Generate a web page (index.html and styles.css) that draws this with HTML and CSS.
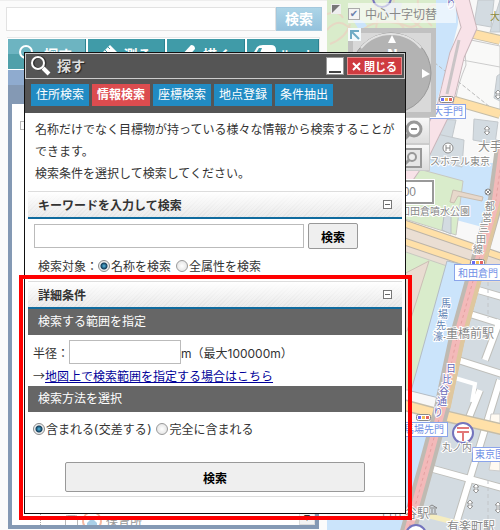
FILE: index.html
```
<!DOCTYPE html>
<html lang="ja">
<head>
  <meta charset="UTF-8">
  <meta name="viewport" content="width=device-width, initial-scale=1.0">
  <title>地図検索</title>
  <link rel="stylesheet" href="styles.css">
</head>
<body>

  <div class="page">
    <!-- 左メニュー -->
    <div class="sidebar">
      <form class="site-search">
        <input type="text" aria-label="キーワード">
        <button type="submit">検索</button>
      </form>
      <nav class="main-menu">
        <a href="#" class="current">
          <svg width="18" height="18" viewBox="0 0 18 18"><circle cx="7" cy="7" r="6" fill="none" stroke="#fff" stroke-width="2"/><path d="M11 11l6 6" stroke="#fff" stroke-width="3"/></svg>探す</a>
        <a href="#">
          <svg width="18" height="18" viewBox="0 0 18 18"><path d="M0 11L11 0l7 7L7 18z" fill="#fff"/><path d="M3 8l2 2M6 5l2 2M9 2l2 2" stroke="#409ba8"/></svg>測る</a>
        <a href="#">
          <svg width="18" height="18" viewBox="0 0 18 18"><path d="M0 18l2-6L13 0q4 0 4 4L6 16z" fill="#fff"/></svg>描く</a>
        <a href="#" class="route">
          <svg width="23" height="18" viewBox="0 0 23 18"><path d="M0 9L4 2q2-2 6-2h8q5 0 5 5v10H0z" fill="#fff"/><path d="M3 8l3-5h3L7 8z" fill="#409ba8"/><circle cx="6" cy="15" r="3" fill="#fff"/><circle cx="17" cy="15" r="3" fill="#fff"/></svg>ルート</a>
      </nav>
      <div class="layer-panel">
        <div class="layer-tree">
          <span class="tree-toggle"></span>
          <label class="tree-item">
            <input type="checkbox">
            <svg width="20" height="20" viewBox="0 0 20 20"><circle cx="10" cy="10" r="9" fill="#fff" stroke="#f5b9a2" stroke-width="2"/><path d="M5 12l5-5 5 5v4H5z" fill="#a9cfe8"/></svg>
            保育所
          </label>
          <span class="tree-scroll">▾</span>
        </div>
      </div>
    </div>

    <!-- 地図 -->
    <div class="map">
      <svg class="map-canvas" viewBox="327 0 173 530" preserveAspectRatio="xMinYMin slice">
        <rect x="327" y="0" width="600" height="530" fill="#f8f8f8"/>

        <!-- 公園と濠 -->
        <path d="M327 0H438V55H327z" fill="#d9eccb"/>
        <g fill="none" stroke="#e6d8c4" stroke-width="2">
          <path d="M327 30q10-12 20-4t18 2 20-6 22 4 16-10 15-10M330 44q16-6 20-20M372 0q8 12 4 28M394 0q-4 16 10 28M418 0q-2 12 14 26M404 14l20 16M327 14q12-4 16 4M384 8l14 10"/>
        </g>
        <path d="M353 20q10-2 14 6l-8 4zM436 0h22v24l-10 40-12 40z" fill="#cbe4fb"/>
        <path d="M386 2l16 1-2 14-16-2z" fill="#d3dbe1"/>
        <path d="M421 155l22 7 50 1-7 65-82-22z" fill="#cbe4fb"/>
        <path d="M415 168l48 13-7 54-51-16v-42z" fill="#d9eccb" stroke="#c8c8c0"/>
        <path d="M450 202l3-12 30 7-1 4-24-5-4 7z" fill="#e7d8cb" stroke="#c9bdb0"/>
        <path d="M444 216l7-3v21l-9-4z" fill="#d3dbe1" stroke="#b9c0c4"/>

        <!-- 建物 -->
        <g fill="#d3dbe1" stroke="#c3c8cc">
          <path d="M478 0h16l-3 27-17-3zM500 0v32h-10z"/>
          <path d="M438 119l18 1-4 18-18-4zM474 119l24 3-3 22-22-4z"/>
          <path d="M437 134l27 6-2 27-34-8z"/>
        </g>

        <!-- 白い道路 -->
        <path d="M466 65q-2-20 0-26l34 7v64l-44-12q2-14 10-33z" fill="#f9f9f8" stroke="#c8c8c8"/>
        <path d="M500 74v27l-6-3 3-22z" fill="#d3dbe1" stroke="#c3c8cc"/>
        <path d="M462 60l38 7" stroke="#ccc" fill="none"/>
        <path d="M425 55l75 60" stroke="#bbb" stroke-dasharray="4 2" fill="none"/>

        <!-- オレンジ道路 -->
        <path d="M465 32l35 8M448 99l52 15" stroke="#c5bda8" stroke-width="10" fill="none"/>
        <path d="M465 32l35 8M448 99l52 15" stroke="#ffe0a8" stroke-width="8" fill="none"/>

        <!-- ピンクの道路 -->
        <path d="M461-2l8 30-12 27-13 54-22 45-18 26" stroke="#c9b6bb" stroke-width="16" fill="none"/>
        <path d="M461-2l8 30-12 27-13 54-22 45-18 26" stroke="#f8e2e8" stroke-width="14" fill="none"/>
        <path d="M459 40l-12 54" stroke="#c9c4c6" stroke-width="3" fill="none"/>

        <!-- 和田倉の大通り -->
        <path d="M400 220l80 28 25 8v35l-45-12-60-18z" fill="#eaded3"/>
        <path d="M400 222l102 35M400 240l80 27" stroke="#bcb4a8" stroke-width="8" fill="none"/>
        <path d="M400 222l102 35M400 240l80 27" stroke="#ffe0a8" stroke-width="6" fill="none"/>
        <path d="M400 250l50 17-32 123h-18z" fill="#d9eccb" stroke="#c8c8c0"/>
        <path d="M400 276l29-15-22 70h-7z" fill="#e9dcd1" stroke="#cbbfb5"/>
        <path d="M447 261l26 6-21 85-13 46-28-7z" fill="#cbe4fb" stroke="#b4bcc4"/>
        <path d="M405 436h28l-18 70-10 24h-78v-12h78z" fill="#cbe4fb" stroke="#b4bcc4"/>

        <!-- 丸の内の街区 -->
        <path d="M480 282h20v248H405l40-118z" fill="#d3dbe1"/>
        <path d="M327 516h78v14h-78z" fill="#cbe4fb"/>
        <g fill="none" stroke="#bfbfbb" stroke-width="8">
          <path d="M478 290l24 7M470 314l32 10M458 360l44 14M500 320l-15 40M500 380l-52 170M426 467l80 22M480 390l-12 30"/>
        </g>
        <g fill="none" stroke="#fff" stroke-width="6">
          <path d="M478 290l24 7M470 314l32 10M458 360l44 14M500 320l-15 40M500 380l-52 170M426 467l80 22M480 390l-12 30"/>
        </g>
        <path d="M455 378l20 6-3 18" stroke="#fff" stroke-width="4" fill="none"/>
        <path d="M491 414h9v16l-11-3zM491 460h9v11l-11-1z" fill="#fffaf2" stroke="#ccc"/>
        <path d="M400 404l45 12 60 14" stroke="#c5bda8" stroke-width="12" fill="none"/>
        <path d="M400 404l45 12 60 14" stroke="#ffe0a8" stroke-width="9" fill="none"/>
        <path d="M430 516l46 12" stroke="#f5edc0" stroke-width="5" fill="none"/>
        <path d="M488 282v36M488 480v50" stroke="#c2c5c8" stroke-dasharray="4 3" fill="none"/>

        <!-- 都営三田線 -->
        <path d="M504 140l-8 60-20 70-20 72-14 66-14 52-24 86" stroke="#bfbab2" stroke-width="16" fill="none"/>
        <path d="M508 140l-8 60-18 70-20 72-14 66" stroke="#dfc79e" stroke-width="5" fill="none"/>
        <path d="M504 140l-8 60-20 70-20 72-14 66-14 52-24 86" stroke="#f3b9b9" stroke-width="8" fill="none"/>
        <path d="M504 140l-8 60-20 70-20 72-14 66-14 52-24 86" stroke="#e3a0a0" stroke-dasharray="3 3" fill="none"/>

        <!-- 信号 -->
        <g stroke="#888" fill="#fff">
          <rect x="439.5" y="96.500" width="14" height="6" rx="2"/>
          <rect x="470.5" y="259.500" width="14" height="6" rx="2"/>
          <rect x="416.500" y="414.500" width="14" height="6" rx="2"/>
        </g>
        <path d="M441 98h3v3h-3zM472 261h3v3h-3zM418 416h3v3h-3z" fill="#6b6bf0"/>
        <path d="M445 98h3v3h-3zM476 261h3v3h-3zM422 416h3v3h-3z" fill="#f2bd55"/>
        <path d="M449 98h3v3h-3zM480 261h3v3h-3zM426 416h3v3h-3z" fill="#e36464"/>

        <!-- 記号 -->
        <g fill="none" stroke="#7474bd" stroke-width="2">
          <circle cx="463" cy="433" r="10" fill="#fff"/>
          <circle cx="416" cy="535" r="10" fill="#fff"/>
          <circle cx="382" cy="-2" r="9"/>
        </g>
        <path d="M457 428h12M457 432h12M463 432v9" stroke="#e27878" stroke-width="2" fill="none"/>
        <circle cx="448" cy="148" r="5" fill="#fff" stroke="#888"/>
        <path d="M446 145v6M450 145v6M446 148h4" stroke="#888" fill="none"/>
        <circle cx="488" cy="192" r="3" fill="#fff" stroke="#888"/>
        <path d="M486 190l4 4M490 190l-4 4" stroke="#888"/>
        <path d="M427 508l5-3 5 3zM429 509v4M432 509v4M435 509v4M427 514h10" stroke="#888" fill="none"/>
        <g fill="#fff" stroke="#999">
          <path d="M487 126l3 3h-2v3h2l-3 3-3-3h2v-3h-2zM476 484l3 3h-2v3h2l-3 3-3-3h2v-3h-2zM470 500l3 3h-2v3h2l-3 3-3-3h2v-3h-2zM498 502l3 3h-2v5h2l-3 3-3-3h2v-5h-2zM498 90l3 3h-2v3h2l-3 3-3-3h2v-3h-2z"/>
        </g>

        <!-- 注記 -->
        <g fill="#fff" stroke="#8aa4ea">
          <rect x="426.500" y="104.500" width="39" height="14"/>
          <rect x="454.500" y="264.500" width="52" height="16"/>
          <rect x="396.500" y="422.500" width="51" height="14"/>
          <rect x="472.500" y="447.500" width="50" height="14"/>
        </g>
        <g class="gate-label">
          <text x="433" y="115">大手門</text>
          <text x="458" y="277">和田倉門</text>
          <text x="404" y="433">馬場先門</text>
          <text x="475" y="458">東京国</text>
        </g>
        <g class="place-label">
          <text x="430" y="165">スホテル東京</text>
          <text x="478" y="151" class="large">大手</text>
          <text x="400" y="215">和田倉噴水公園</text>
          <text x="442" y="451">丸ノ内</text>
          <text x="434" y="338" class="large">二重橋前駅</text>
          <text x="381" y="518" class="large">日比谷駅</text>
          <text x="447" y="531" class="large">有楽町駅</text>
          <text x="485" y="210">都</text>
          <text x="482" y="221">営</text>
          <text x="479" y="232">三</text>
          <text x="476" y="243">田</text>
          <text x="473" y="253">線</text>
        </g>
        <g class="water-label">
          <text x="441" y="307">馬</text>
          <text x="438" y="318">場</text>
          <text x="436" y="329">先</text>
          <text x="433" y="340">濠</text>
        </g>
        <g class="street-label">
          <text x="446" y="8">り</text>
          <text x="446" y="372">日</text>
          <text x="442" y="383">比</text>
          <text x="439" y="394">谷</text>
          <text x="437" y="405">通</text>
          <text x="433" y="416">り</text>
        </g>
        <text x="490" y="20" class="town-label">大</text>
      </svg>

      <div class="map-tools">
        <svg class="corner" width="10" height="10" viewBox="0 0 10 10"><rect width="10" height="10" fill="#eee"/><path d="M1 1h8L1 9z" fill="#777"/></svg>
        <div class="tool-column">
          <label class="cross-toggle"><input type="checkbox" checked> 中心十字切替</label>
          <svg class="compass" width="88" height="89" viewBox="0 0 88 89">
            <rect width="88" height="89" fill="#c1c1c1"/>
            <path d="M5 5h78v79H5z" fill="#d9d9d9"/>
            <circle cx="43" cy="45" r="40" fill="#b3b3b3" stroke="#999"/>
            <path d="M13 20q12-14 30-14t30 14" stroke="#e2e2e2" stroke-width="2" fill="none"/>
            <path d="M40 15L44 7l4 8zM74 41l8 5-8 4z" fill="#fff"/>
            <text x="39" y="30" class="north">N</text>
            <path d="M0 0h13v13H0z" fill="#f4fafc"/>
            <path d="M3 11V3h8M3 3l8 8" stroke="#6eaac4" stroke-width="2" fill="none"/>
          </svg>
          <button type="button" class="zoom-button" aria-label="縮小">
            <svg width="22" height="22" viewBox="0 0 22 22"><circle cx="13" cy="9" r="7" fill="#fff" stroke="#999" stroke-width="3"/><path d="M10 9h6" stroke="#888" stroke-width="2"/><path d="M8 14l-6 6" stroke="#999" stroke-width="4"/></svg>
          </button>
          <button type="button" class="zoom-button" aria-label="範囲拡大">
            <svg width="22" height="22" viewBox="0 0 22 22"><path d="M0 2h20v18H0z" fill="#e6e6e6" stroke="#999" stroke-width="2"/><circle cx="11" cy="10" r="4" fill="#eee" stroke="#999" stroke-width="2"/><path d="M8 13l-4 4" stroke="#999" stroke-width="3"/></svg>
          </button>
          <input type="text" class="scale-box" value="10000" aria-label="縮尺">
        </div>
      </div>
    </div>
  </div>

  <!-- 検索ウィンドウ -->
  <div class="dialog" role="dialog" aria-labelledby="dialogTitle">
    <div class="dialog-title">
      <svg width="22" height="22" viewBox="0 0 22 22"><circle cx="9" cy="8" r="6" fill="none" stroke="#333" stroke-width="3"/><circle cx="8" cy="8" r="6" fill="none" stroke="#fff" stroke-width="2"/><path d="M13 13l6 6" stroke="#fff" stroke-width="4"/></svg>
      <h1 id="dialogTitle">探す</h1>
      <button type="button" class="minimize" aria-label="最小化"></button>
      <button type="button" class="close"><svg width="9" height="9" viewBox="0 0 9 9"><path d="M1 1l7 7M8 1L1 8" stroke="#fff" stroke-width="2"/></svg>閉じる</button>
    </div>
    <nav class="tabs">
      <a href="#">住所検索</a>
      <a href="#" class="active">情報検索</a>
      <a href="#">座標検索</a>
      <a href="#">地点登録</a>
      <a href="#">条件抽出</a>
    </nav>

    <form class="dialog-body">
      <p class="guide">名称だけでなく目標物が持っている様々な情報から検索することができます。<br>検索条件を選択して検索してください。</p>

      <h2>キーワードを入力して検索<button type="button" class="fold" aria-label="閉じる"></button></h2>
      <div class="keyword-row">
        <input type="text" aria-label="キーワード">
        <button type="submit">検索</button>
      </div>
      <div class="target-row">
        <span>検索対象：</span>
        <label><input type="radio" name="target" checked>名称を検索</label>
        <label><input type="radio" name="target">全属性を検索</label>
      </div>

      <h2>詳細条件<button type="button" class="fold" aria-label="閉じる"></button></h2>
      <h3>検索する範囲を指定</h3>
      <div class="radius-row">
        <label for="radius">半径：</label><input type="text" id="radius">m（最大100000m）
      </div>
      <div class="link-row">→<a href="#">地図上で検索範囲を指定する場合はこちら</a></div>
      <h3>検索方法を選択</h3>
      <div class="method-row">
        <label><input type="radio" name="method" checked>含まれる(交差する)</label>
        <label><input type="radio" name="method">完全に含まれる</label>
      </div>
      <button type="submit" class="submit-button">検索</button>
    </form>
    <div class="dialog-footer"></div>
    <div class="highlight"></div>
  </div>

</body>
</html>
```

FILE: styles.css
```
* {
  box-sizing: border-box;
}
body, input, button {
  font-family: "DejaVu Sans", "Noto Sans CJK JP", sans-serif;
  font-size: 12px;
}
body {
  margin: 0;
  color: #333;
  background-color: #fff;
  overflow: hidden;
}
h1, h2, h3, p {
  margin: 0;
}
button {
  cursor: pointer;
}
.page {
  display: flex;
  height: 100vh;
}

/* 左メニュー */
.sidebar {
  display: flex;
  flex-direction: column;
  flex: 0 0 327px;
  padding: 6px 5px 1px 6px;
  border-top: 1px solid #eee;
  background-color: #fbfbfb;
}
.site-search {
  display: flex;
  height: 24px;
}
.site-search input {
  flex: 1;
  min-width: 0;
  border: 1px solid #e2e2e2;
  background-color: #fff;
}
.site-search button {
  width: 46px;
  padding: 0;
  border: 1px solid #a4c8dd;
  background: linear-gradient(#add5e8, #94c2dd);
  color: #fff;
  font-size: 14px;
  font-weight: bold;
  line-height: 20px;
}
.main-menu {
  display: flex;
  gap: 2px;
  height: 33px;
  margin: 6px 2px 0 1px;
  padding: 1px 0 1px 1px;
  border: 1px solid #e8e8e8;
  border-width: 1px 1px 0 0;
  background-color: #fff;
}
.main-menu a {
  display: flex;
  flex: 1;
  align-items: center;
  gap: 7px;
  padding-left: 11px;
  border-right: 1px solid #2d8290;
  background-color: #409ba8;
  color: #fff;
  font-size: 14px;
  font-weight: bold;
  text-decoration: none;
  white-space: nowrap;
}
.main-menu .current {
  background: linear-gradient(#6db4c1 50%, #50a0aa 50%);
}
.main-menu .route {
  gap: 4px;
  padding-left: 6px;
  font-size: 12px;
}
.layer-panel {
  flex: 1;
  min-height: 0;
  margin: 0 3px 0 2px;
  padding: 34px 4px 4px;
  background: linear-gradient(#8fabcf 15px, #8499b4 15px);
}
.layer-tree {
  display: flex;
  align-items: flex-end;
  height: 100%;
  background-color: #fff;
  overflow: hidden;
}
.tree-toggle {
  align-self: flex-start;
  width: 9px;
  height: 9px;
  margin: 17px 0 0 8px;
  border: 1px solid #bbb;
}
.tree-item {
  display: flex;
  align-items: center;
  flex: 1;
  gap: 4px;
  height: 12px;
  margin-left: 11px;
  padding: 4px 0 0 24px;
  border-left: 1px dotted #aaa;
  color: #999;
}
.tree-item input {
  margin: 0;
  opacity: 0.5;
}
.tree-scroll {
  width: 16px;
  height: 16px;
  border: 1px solid #ddd;
  background-color: #f3f3f3;
  line-height: 14px;
  text-align: center;
}

/* 地図 */
.map {
  position: relative;
  flex: 1;
  min-width: 0;
  overflow: hidden;
}
.map-canvas {
  display: block;
  width: 100%;
  height: 100%;
}
.map-canvas text {
  font-family: "Noto Sans CJK JP", sans-serif;
  font-size: 10px;
}
.map-canvas .large {
  font-size: 12px;
}
.gate-label {
  fill: #6f8fe6;
}
.place-label, .water-label, .street-label {
  paint-order: stroke;
  stroke: #fff;
  stroke-width: 2px;
}
.place-label {
  fill: #888;
}
.water-label {
  fill: #5f83b5;
}
.street-label {
  fill: #6868b8;
}
.town-label {
  fill: #8a8a3c;
}
.map-tools {
  position: absolute;
  top: 3px;
  left: 4px;
  display: flex;
  gap: 7px;
}
.corner {
  margin-top: 1px;
}
.tool-column {
  display: flex;
  flex-direction: column;
  align-items: flex-start;
  margin-left: 0;
}
.cross-toggle {
  display: flex;
  align-items: center;
  gap: 5px;
  width: 108px;
  height: 20px;
  margin-bottom: 5px;
  background-color: rgba(255, 255, 255, 0.6);
  color: #888;
  white-space: nowrap;
}
.cross-toggle input {
  appearance: none;
  width: 12px;
  height: 12px;
  margin: 2px 0 0;
  border: 1px solid #aaa;
  background-color: #f4f4f4;
  line-height: 10px;
  text-align: center;
}
.cross-toggle input:checked::before {
  content: "✔";
  display: block;
  color: #6b7fac;
  font-size: 10px;
}
.north {
  fill: #fff;
  font-size: 13px;
  font-weight: bold;
}
.zoom-button {
  display: flex;
  align-items: center;
  justify-content: flex-end;
  width: 82px;
  height: 27px;
  padding: 0 6px 0 0;
  border: 1px solid #ccc;
  background: linear-gradient(#f8f8f8, #ddd);
}
.scale-box {
  width: 86px;
  height: 24px;
  margin-top: 9px;
  padding: 0 16px 0 0;
  border: 2px solid #999;
  outline: 1px solid #fff;
  background-color: #fff;
  color: #888;
  font-family: "Liberation Sans", Arial, sans-serif;
  text-align: right;
}

/* 検索ウィンドウ */
.dialog {
  position: absolute;
  top: 52px;
  left: 24px;
  width: 382px;
  border: 1px solid #111;
  background-color: #fff;
}
.dialog-title {
  display: flex;
  align-items: center;
  height: 26px;
  padding: 0 2px 0 4px;
  border: 1px solid #ccc;
  background-color: #555;
}
.dialog-title h1 {
  flex: 1;
  margin-left: 5px;
  color: #ddd;
  font-size: 14px;
  line-height: 20px;
  text-shadow: 1px 1px 1px #222;
}
.minimize {
  width: 18px;
  height: 18px;
  margin-right: 3px;
  padding: 11px 2px 0;
  border: 1px solid #999;
  background-color: #fff;
}
.minimize::before {
  content: "";
  display: block;
  height: 2px;
  background-color: #444;
}
.close {
  display: flex;
  align-items: center;
  justify-content: center;
  gap: 3px;
  width: 55px;
  height: 18px;
  padding: 0;
  border: 1px solid #e88b8b;
  background-color: #cf3b40;
  color: #fff;
  font-size: 11px;
  font-weight: bold;
  white-space: nowrap;
}
.tabs {
  display: flex;
  gap: 3px;
  height: 34px;
  padding: 5px 6px 7px;
  background-color: #555;
}
.tabs a {
  padding: 0 5px;
  background-color: #218bc3;
  color: #fff;
  line-height: 22px;
  text-decoration: none;
  white-space: nowrap;
}
.tabs .active {
  background-color: #dc4c4f;
  font-weight: bold;
}
.dialog-body {
  padding: 6px 3px 4px;
}
.guide {
  padding: 0 5px 6px 7px;
  line-height: 22px;
}
.dialog-body h2 {
  display: flex;
  align-items: center;
  justify-content: space-between;
  height: 28px;
  padding: 0 10px;
  border-top: 1px solid #ddd;
  border-bottom: 2px solid #106b9e;
  background: linear-gradient(#fff, rgba(255, 255, 255, 0.2)), repeating-linear-gradient(135deg, #e6e6e6 0 2px, #dcdcdc 2px 3px);
  font-size: 12px;
}
.fold {
  width: 9px;
  height: 9px;
  padding: 3px 1px;
  border: 1px solid #777;
  background-color: #fff;
}
.fold::before {
  content: "";
  display: block;
  height: 1px;
  background-color: #666;
}
.keyword-row {
  display: flex;
  align-items: center;
  gap: 4px;
  padding: 4px 44px 0 6px;
}
.keyword-row input, .radius-row input {
  height: 24px;
  border: 1px solid #bbb;
  background-color: #fff;
}
.keyword-row input {
  flex: 1;
  min-width: 0;
}
.keyword-row button, .submit-button {
  border: 1px solid #999;
  border-radius: 2px;
  background-color: #efefef;
  color: #000;
  font-weight: bold;
}
.keyword-row button {
  width: 50px;
  height: 26px;
  padding: 0;
}
.target-row, .method-row {
  display: flex;
  align-items: center;
  height: 32px;
}
.target-row {
  padding-left: 10px;
}
.target-row label, .method-row label {
  display: flex;
  align-items: center;
  margin-right: 5px;
}
.dialog-body input[type="radio"] {
  appearance: none;
  width: 12px;
  height: 12px;
  margin: 2px 1px 0 0;
  border: 1px solid #999;
  border-radius: 50%;
  background: radial-gradient(#fff, #ddd);
}
.dialog-body input[type="radio"]:checked {
  border-color: #888;
  background: radial-gradient(circle, #58bce4 0, #123e5c 3px, #eee 4px);
}
.dialog-body h3 {
  padding-left: 10px;
  background-color: #666;
  color: #fff;
  font-size: 12px;
  font-weight: normal;
  line-height: 26px;
}
.radius-row {
  display: flex;
  align-items: center;
  height: 34px;
  padding-left: 5px;
  font-family: Inter, "Noto Sans CJK JP", sans-serif;
}
.radius-row input {
  width: 112px;
}
.link-row {
  height: 17px;
  padding-left: 5px;
  font-family: "Noto Sans CJK JP", sans-serif;
  line-height: 14px;
}
.link-row a {
  color: #009;
}
.method-row {
  padding-left: 5px;
}
.submit-button {
  display: block;
  width: 300px;
  height: 30px;
  margin: 18px auto 0;
}
.dialog-footer {
  height: 17px;
  border-top: 1px solid #ddd;
}
/* 赤枠 */
.highlight {
  position: absolute;
  top: 222px;
  right: -7px;
  bottom: -7px;
  left: -6px;
  border: 4px solid #f00;
  pointer-events: none;
}
```
